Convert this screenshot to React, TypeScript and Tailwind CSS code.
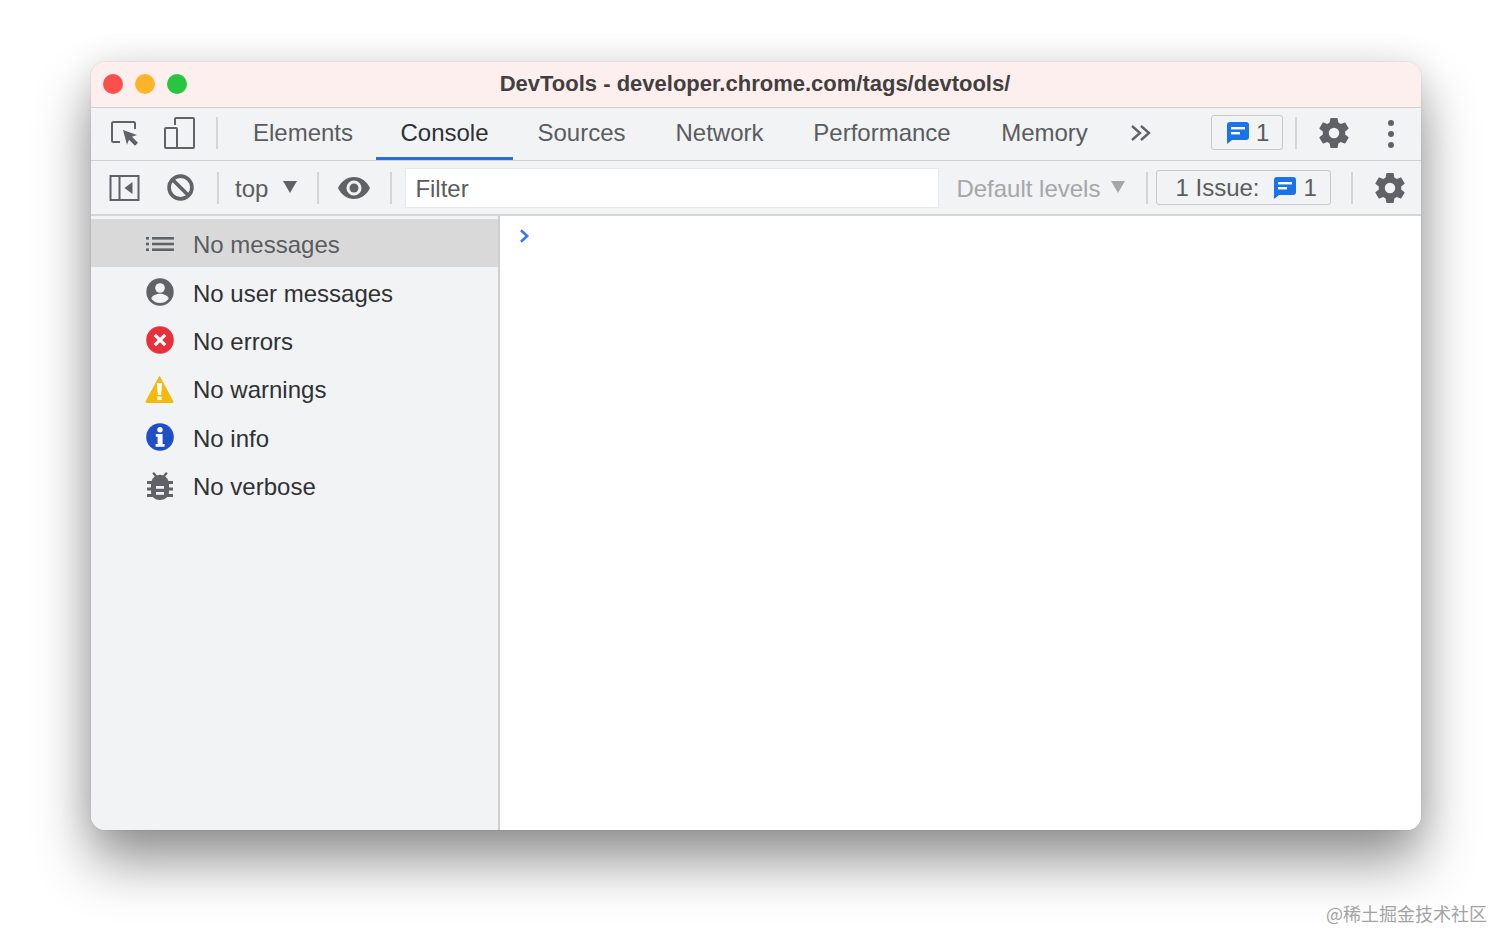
import React from "react";

const Msg = ({ className = "" }: { className?: string }) => (
  <svg viewBox="0 0 22 22" className={`shrink-0 ${className}`}>
    <path d="M3 0h16a3 3 0 0 1 3 3v12a3 3 0 0 1-3 3H5l-5 4V3a3 3 0 0 1 3-3z" fill="#1a73e8" />
    <rect x="4" y="5" width="14" height="2.4" fill="#fff" />
    <rect x="4" y="10" width="9" height="2.4" fill="#fff" />
  </svg>
);

const Gear = ({ className = "" }: { className?: string }) => (
  <svg viewBox="0 0 24 24" className={className} fill="#5f6368">
    <path
      fillRule="evenodd"
      d="M19.43 12.98c.04-.32.07-.64.07-.98s-.03-.66-.07-.98l2.11-1.65c.19-.15.24-.42.12-.64l-2-3.46c-.12-.22-.39-.3-.61-.22l-2.49 1c-.52-.4-1.08-.73-1.69-.98l-.38-2.65C14.46 2.18 14.25 2 14 2h-4c-.25 0-.46.18-.49.42l-.38 2.65c-.61.25-1.17.59-1.69.98l-2.49-1c-.23-.09-.49 0-.61.22l-2 3.46c-.13.22-.07.49.12.64l2.11 1.65c-.04.32-.07.65-.07.98s.03.66.07.98l-2.11 1.65c-.19.15-.24.42-.12.64l2 3.46c.12.22.39.3.61.22l2.49-1c.52.4 1.08.73 1.69.98l.38 2.65c.03.24.24.42.49.42h4c.25 0 .46-.18.49-.42l.38-2.65c.61-.25 1.17-.59 1.69-.98l2.49 1c.23.09.49 0 .61-.22l2-3.46c.12-.22.07-.49-.12-.64l-2.11-1.65zM12 15.5a3.5 3.5 0 1 1 0-7 3.500 3.500 0 0 1 0 7z"
    />
  </svg>
);

const Sep = ({ className = "" }: { className?: string }) => <div className={`h-[32px] w-[2px] shrink-0 bg-[#d3d5d7] ${className}`} />;

const Caret = ({ className = "" }: { className?: string }) => (
  <svg viewBox="0 0 14 12" className={`shrink-0 ${className}`}>
    <path d="M0 0h14L7 12z" fill="currentColor" />
  </svg>
);

const tabs = [
  { label: "Elements", w: "w-[158px] pl-[12px]" },
  { label: "Console", w: "w-[137px]", active: true },
  { label: "Sources", w: "w-[137px]" },
  { label: "Network", w: "w-[139px]" },
  { label: "Performance", w: "w-[186px]" },
  { label: "Memory", w: "w-[139px]" },
];

const rows: { label: string; icon: React.ReactNode; active?: boolean }[] = [
  {
    label: "No messages",
    active: true,
    icon: (
      <svg viewBox="0 0 28 16" className="h-[16px] w-[28px]" fill="#5f6368">
        <rect x="0" y="1" width="3" height="2.6" />
        <rect x="0" y="6.700" width="3" height="2.6" />
        <rect x="0" y="12.400" width="3" height="2.6" />
        <rect x="6" y="1" width="22" height="2.6" />
        <rect x="6" y="6.700" width="22" height="2.6" />
        <rect x="6" y="12.400" width="22" height="2.6" />
      </svg>
    ),
  },
  {
    label: "No user messages",
    icon: (
      <svg viewBox="0 0 28 28" className="h-[28px] w-[28px]">
        <circle cx="14" cy="14" r="13.700" fill="#5f6368" />
        <circle cx="14" cy="10" r="4.800" fill="#f1f3f5" />
        <path d="M5.200 20.500c1.400-3.200 5.400-4.700 8.800-4.700s7.400 1.500 8.800 4.700A10.800 10.800 0 0 1 14 25a10.800 10.800 0 0 1-8.800-4.500z" fill="#f1f3f5" />
      </svg>
    ),
  },
  {
    label: "No errors",
    icon: (
      <svg viewBox="0 0 28 28" className="h-[28px] w-[28px]">
        <circle cx="14" cy="14" r="13.800" fill="#e8303a" />
        <path d="M8.800 8.800l10.400 10.400M19.200 8.800L8.800 19.200" stroke="#fff" strokeWidth="3.200" />
      </svg>
    ),
  },
  {
    label: "No warnings",
    icon: (
      <svg viewBox="0 0 29 28" className="h-[28px] w-[29px]">
        <path d="M14.500 1.500 28 26.500a.7.7 0 0 1-.6 1H1.600a.7.7 0 0 1-.6-1z" fill="#f2b90f" stroke="#f2b90f" strokeWidth="1" />
        <path d="M12 8h5l-.8 12h-3.400z" fill="#fff" />
        <rect x="12.400" y="21.500" width="4.200" height="3.600" fill="#fff" />
      </svg>
    ),
  },
  {
    label: "No info",
    icon: (
      <svg viewBox="0 0 28 28" className="h-[28px] w-[28px]">
        <circle cx="14" cy="14" r="13.800" fill="#1f4fc7" />
        <circle cx="14" cy="6.800" r="2.700" fill="#fff" />
        <path d="M9.800 11h6.800v10h2v2.800h-9V21h2v-7.200h-1.800z" fill="#fff" />
      </svg>
    ),
  },
  {
    label: "No verbose",
    icon: (
      <svg viewBox="0 0 26 28" className="h-[28px] w-[26px]" fill="#5f6368">
        <path d="M7 0l3 3.400a8 8 0 0 1 6 0L19 0l1.800 1.600-2.600 3A8 8 0 0 1 21.500 9h-17a8 8 0 0 1 3.300-4.400l-2.600-3z" />
        <path fillRule="evenodd" d="M4 10h18v10c0 4.800-4 8-9 8s-9-3.200-9-8zM9 14v2.800h8V14zM9 20v2.800h8V20z" />
        <rect x="0" y="9" width="26" height="3" />
        <rect x="0" y="15.500" width="26" height="3" />
        <rect x="0" y="22" width="26" height="3" />
        <rect x="9" y="14" width="8" height="2.800" fill="#f1f3f5" />
        <rect x="9" y="20" width="8" height="2.800" fill="#f1f3f5" />
      </svg>
    ),
  },
];

export default function App() {
  return (
    <div className="relative h-[950px] w-[1512px] overflow-hidden bg-white pl-[91px] pt-[62px] font-['Liberation_Sans',sans-serif]">
      <div className="flex h-[768px] w-[1330px] flex-col overflow-hidden rounded-[14px] bg-white shadow-[0_0_1px_rgba(0,0,0,0.35),0_32px_55px_rgba(0,0,0,0.42),0_0_35px_rgba(0,0,0,0.1)]">
        {/* title bar */}
        <div className="relative flex h-[46px] shrink-0 items-center justify-center border-b border-[#d0d2d3] bg-[#fcefee] pb-[3px]">
          <div className="absolute left-[12px] top-[12px] flex gap-[12px]">
            <div className="h-[20px] w-[20px] rounded-full bg-[#fb4f4b]" />
            <div className="h-[20px] w-[20px] rounded-full bg-[#fdb429]" />
            <div className="h-[20px] w-[20px] rounded-full bg-[#28c640]" />
          </div>
          <span className="ml-[-2px] text-[22px] font-bold text-[#433f3f]">DevTools - developer.chrome.com/tags/devtools/</span>
        </div>

        {/* main toolbar */}
        <div className="flex h-[53px] shrink-0 items-center border-b border-[#cfd1d3] bg-[#f1f3f4] pb-[3px]">
          <svg viewBox="0 0 28 28" className="ml-[20px] mt-[3px] h-[28px] w-[28px] shrink-0" fill="none">
            <path d="M9 22H2.500a1.500 1.500 0 0 1-1.500-1.500V3.500A1.500 1.500 0 0 1 2.500 2h20A1.500 1.500 0 0 1 24 3.500V9" stroke="#5f6368" strokeWidth="2" />
            <path d="M12 10l14 5-5 1.700 6 6-3 3-6-6-2 5z" fill="#5f6368" />
          </svg>
          <svg viewBox="0 0 31 32" className="ml-[25px] h-[32px] w-[31px] shrink-0" fill="none" stroke="#5f6368" strokeWidth="2">
            <path d="M11 8V2a1 1 0 0 1 1-1h17a1 1 0 0 1 1 1v28a1 1 0 0 1-1 1H11" />
            <rect x="1" y="11" width="12" height="20" rx="1" />
          </svg>
          <Sep className="ml-[21px]" />
          <div className="flex h-[52px] self-start">
            {tabs.map((t) => (
              <div
                key={t.label}
                className={`flex h-[52px] items-center justify-center text-[24px] ${t.w} ${t.active ? "border-b-[3px] border-[#2a6fd4] text-[#303134]" : "pb-[3px] text-[#5a5c60]"}`}
              >
                {t.label}
              </div>
            ))}
          </div>
          <svg viewBox="0 0 20 16" className="ml-[17px] h-[16px] w-[20px] shrink-0" fill="none" stroke="#5f6368" strokeWidth="2.400">
            <path d="M1 1l8 7-8 7M10 1l8 7-8 7" />
          </svg>
          <div className="ml-[60px] flex h-[35px] w-[72px] shrink-0 items-center gap-[7px] rounded-[3px] border border-[#c6c8ca] pl-[15px] text-[24px] text-[#5a5c60]">
            <Msg className="h-[22px] w-[22px]" />
            <span>1</span>
          </div>
          <Sep className="ml-[12px]" />
          <Gear className="ml-[19px] h-[36px] w-[36px] shrink-0" />
          <div className="ml-[36px] mt-[3px] flex shrink-0 flex-col gap-[5px]">
            <div className="h-[6px] w-[6px] rounded-full bg-[#5f6368]" />
            <div className="h-[6px] w-[6px] rounded-full bg-[#5f6368]" />
            <div className="h-[6px] w-[6px] rounded-full bg-[#5f6368]" />
          </div>
        </div>

        {/* console toolbar */}
        <div className="flex h-[55px] shrink-0 items-center border-b-2 border-[#d3d5d7] bg-[#f1f3f4]">
          <svg viewBox="0 0 30 26" className="ml-[18px] h-[26px] w-[31px] shrink-0" fill="none" stroke="#5f6368" strokeWidth="2">
            <rect x="1" y="1" width="28" height="24" />
            <path d="M10 1v24" />
            <path d="M23 7v12l-8-6z" fill="#5f6368" stroke="none" />
          </svg>
          <svg viewBox="0 0 26 26" className="ml-[27px] h-[27px] w-[27px] shrink-0" fill="none" stroke="#5f6368" strokeWidth="3.500">
            <circle cx="13" cy="13" r="11" />
            <path d="M5.500 5.500l15 15" />
          </svg>
          <Sep className="ml-[23px]" />
          <span className="ml-[16px] mt-[2px] text-[24px] text-[#5a5c60]">top</span>
          <Caret className="ml-[15px] mb-[1px] h-[12px] w-[14px] text-[#5f6368]" />
          <Sep className="ml-[20px]" />
          <svg viewBox="0 0 32 22" className="ml-[19px] h-[22px] w-[32px] shrink-0">
            <path fillRule="evenodd" d="M16 0C9 0 3 4.500 0 11c3 6.500 9 11 16 11s13-4.500 16-11C29 4.500 23 0 16 0zm0 18.500a7.500 7.500 0 1 1 0-15 7.500 7.500 0 0 1 0 15z" fill="#5f6368" />
            <circle cx="16" cy="11" r="4.500" fill="#5f6368" />
          </svg>
          <Sep className="ml-[20px]" />
          <div className="ml-[13px] flex h-[40px] w-[534px] shrink-0 items-center border border-[#e6e8e9] bg-white pl-[9px] pt-[2px] text-[24px] text-[#5a5c60]">Filter</div>
          <span className="ml-[17px] mt-[2px] shrink-0 text-[24px] text-[#a5a7a9]">Default levels</span>
          <Caret className="ml-[11px] mb-[1px] h-[12px] w-[14px] text-[#a5a7a9]" />
          <Sep className="ml-[21px]" />
          <div className="ml-[8px] flex h-[35px] w-[175px] shrink-0 items-center gap-[17px] rounded-[3px] border border-[#c6c8ca] pl-[18px] text-[24px] text-[#5a5c60]">
            <span className="w-[82px] whitespace-nowrap">1 Issue:</span>
            <span className="flex items-center gap-[7px]">
              <Msg className="h-[22px] w-[22px]" />
              <span>1</span>
            </span>
          </div>
          <Sep className="ml-[20px]" />
          <Gear className="ml-[19px] h-[36px] w-[36px] shrink-0" />
        </div>

        {/* body */}
        <div className="flex min-h-0 flex-1">
          <div className="w-[409px] shrink-0 border-r-2 border-[#cdcfd1] bg-[#f1f3f5] pt-[3px]">
            {rows.map((r) => (
              <div key={r.label} className={`flex h-[48.4px] items-center text-[24px] ${r.active ? "bg-[#d9d9d9] text-[#5a5c60]" : "text-[#303134]"}`}>
                <div className="ml-[54px] mt-[1px] flex w-[29px] justify-center">{r.icon}</div>
                <span className="ml-[19px] pt-[4px]">{r.label}</span>
              </div>
            ))}
          </div>
          <div className="flex-1 bg-white pl-[19px] pt-[13px]">
            <svg viewBox="0 0 12 16" className="h-[14px] w-[11px]" fill="none" stroke="#3b78e7" strokeWidth="3">
              <path d="M2 1.500l7 6.500-7 6.500" />
            </svg>
          </div>
        </div>
      </div>

      <div className="absolute left-[1326px] top-[903px] font-['Noto_Sans_CJK_SC',sans-serif] text-[18px] leading-[20px] text-[#a3a3a3]">@稀土掘金技术社区</div>
    </div>
  );
}
